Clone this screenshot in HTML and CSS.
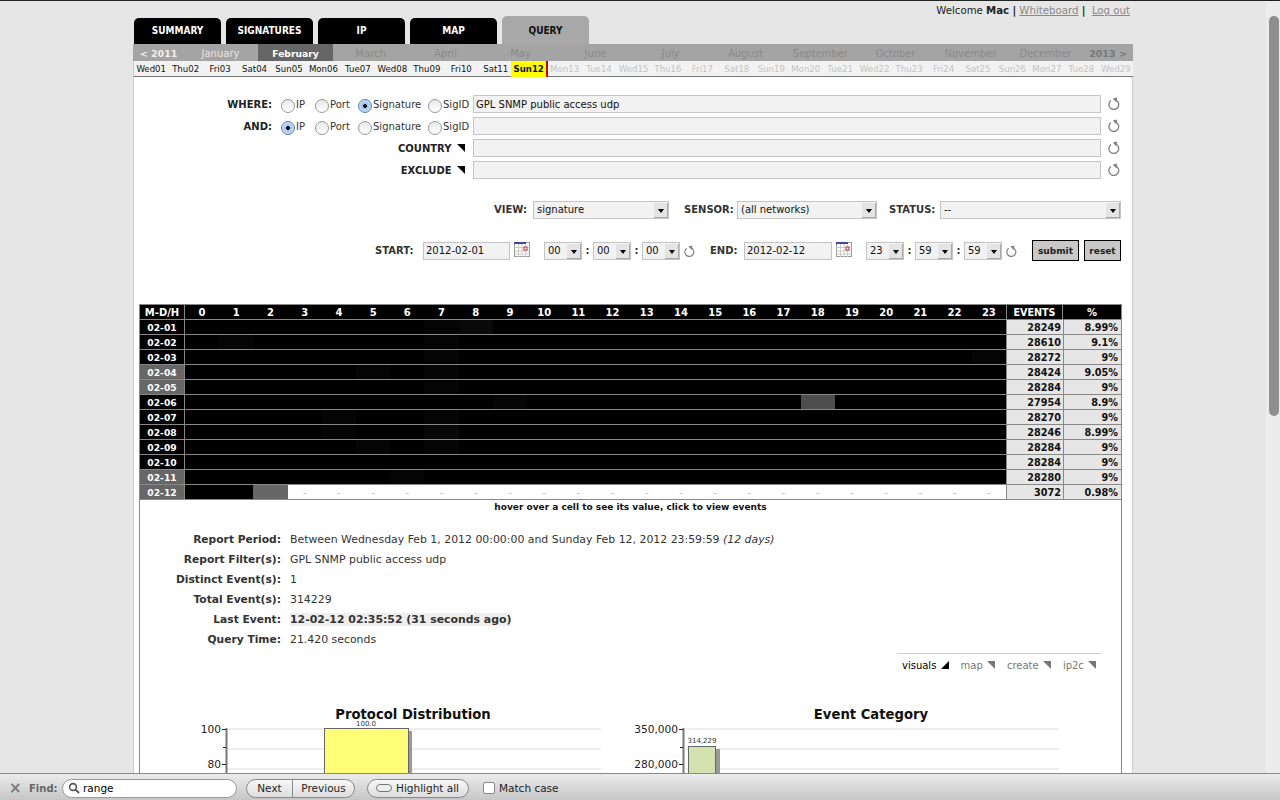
FILE: index.html
```html
<!doctype html>
<html lang="en">
    <head>
        <meta charset="utf-8">
        <title>Query</title>
        <link rel="stylesheet" href="styles.css">
    </head>
    <body>
        <svg class="defs" width="0" height="0">
            <symbol id="refresh" viewBox="0 0 12 13">
                <path d="M2.9 3.6 A4.9 4.9 0 1 0 7.6 3" fill="none" stroke="#808080" stroke-width="1.3"/>
                <path d="M9.2 0.4 L4.8 1.6 L8.4 5.4 Z" fill="#808080"/>
            </symbol>
            <symbol id="cal" viewBox="0 0 16 16">
                <rect x="0.5" y="0.5" width="15" height="14" fill="#fff" stroke="#999"/>
                <path d="M0.5 5.5H15.5M0.5 9H15.5M0.5 12H15.5M4.5 2V15M8 2V15M11.5 2V15" stroke="#ccc" fill="none"/>
                <rect x="0" y="0" width="12" height="2" fill="#44449c"/>
                <rect x="10" y="5" width="3" height="3" fill="#fff" stroke="#a33"/>
            </symbol>
        </svg>
        <div class="app">
            <div class="page">
                <div class="wrap">
                    <div class="welcome">Welcome <b>Mac</b> <b>|</b> <a href="#">Whiteboard</a> <b>|</b> &nbsp;<a href="#">Log out</a></div>
                    <div class="tabs">
                        <a class="tab" href="#">SUMMARY</a>
                        <a class="tab" href="#">SIGNATURES</a>
                        <a class="tab" href="#">IP</a>
                        <a class="tab" href="#">MAP</a>
                        <a class="tab active" href="#">QUERY</a>
                    </div>
                    <div class="months">
                        <a class="year" href="#">&lt; 2011</a>
                        <a class="has" href="#">January</a>
                        <a class="cur" href="#">February</a>
                        <a href="#">March</a>
                        <a href="#">April</a>
                        <a href="#">May</a>
                        <a href="#">June</a>
                        <a href="#">July</a>
                        <a href="#">August</a>
                        <a href="#">September</a>
                        <a href="#">October</a>
                        <a href="#">November</a>
                        <a href="#">December</a>
                        <a class="year next" href="#">2013 &gt;</a>
                    </div>
                    <div class="days">
                        <a href="#">Wed01</a><a href="#">Thu02</a><a href="#">Fri03</a><a href="#">Sat04</a><a href="#">Sun05</a><a href="#">Mon06</a><a href="#">Tue07</a><a href="#">Wed08</a><a href="#">Thu09</a><a href="#">Fri10</a><a href="#">Sat11</a><a class="today" href="#">Sun12</a><a class="off">Mon13</a><a class="off">Tue14</a><a class="off">Wed15</a><a class="off">Thu16</a><a class="off">Fri17</a><a class="off">Sat18</a><a class="off">Sun19</a><a class="off">Mon20</a><a class="off">Tue21</a><a class="off">Wed22</a><a class="off">Thu23</a><a class="off">Fri24</a><a class="off">Sat25</a><a class="off">Sun26</a><a class="off">Mon27</a><a class="off">Tue28</a><a class="off">Wed29</a>
                    </div>
                    <div class="main">
                        <form class="query">
                            <div class="qrow">
                                <label class="qlabel">WHERE:</label>
                                <label class="opt o1"><input type="radio" name="w"><span>IP</span></label>
                                <label class="opt o2"><input type="radio" name="w"><span>Port</span></label>
                                <label class="opt o3"><input type="radio" name="w" checked><span>Signature</span></label>
                                <label class="opt o4"><input type="radio" name="w"><span>SigID</span></label>
                                <input class="field" type="text" value="GPL SNMP public access udp">
                                <svg class="reset-ico"><use href="#refresh"/></svg>
                            </div>
                            <div class="qrow">
                                <label class="qlabel">AND:</label>
                                <label class="opt o1"><input type="radio" name="a" checked><span>IP</span></label>
                                <label class="opt o2"><input type="radio" name="a"><span>Port</span></label>
                                <label class="opt o3"><input type="radio" name="a"><span>Signature</span></label>
                                <label class="opt o4"><input type="radio" name="a"><span>SigID</span></label>
                                <input class="field" type="text">
                                <svg class="reset-ico"><use href="#refresh"/></svg>
                            </div>
                            <div class="qrow">
                                <label class="qlabel wide">COUNTRY <i class="tri"></i></label>
                                <input class="field" type="text">
                                <svg class="reset-ico"><use href="#refresh"/></svg>
                            </div>
                            <div class="qrow">
                                <label class="qlabel wide">EXCLUDE <i class="tri"></i></label>
                                <input class="field" type="text">
                                <svg class="reset-ico"><use href="#refresh"/></svg>
                            </div>
                            <div class="viewrow">
                                <b class="l-view">VIEW:</b>
                                <div class="sel s-view"><select><option>signature</option></select></div>
                                <b class="l-sensor">SENSOR:</b>
                                <div class="sel s-sensor"><select><option>(all networks)</option></select></div>
                                <b class="l-status">STATUS:</b>
                                <div class="sel s-status"><select><option>--</option></select></div>
                            </div>
                            <div class="daterow">
                                <b class="l-start">START:</b>
                                <input class="datein" type="text" value="2012-02-01">
                                <svg class="cal"><use href="#cal"/></svg>
                                <div class="sel s-time"><select><option>00</option></select></div><b class="colon">:</b>
                                <div class="sel s-time"><select><option>00</option></select></div><b class="colon">:</b>
                                <div class="sel s-time"><select><option>00</option></select></div>
                                <svg class="reset-small"><use href="#refresh"/></svg>
                                <b class="l-end">END:</b>
                                <input class="datein" type="text" value="2012-02-12">
                                <svg class="cal"><use href="#cal"/></svg>
                                <div class="sel s-time"><select><option>23</option></select></div><b class="colon">:</b>
                                <div class="sel s-time"><select><option>59</option></select></div><b class="colon">:</b>
                                <div class="sel s-time"><select><option>59</option></select></div>
                                <svg class="reset-small"><use href="#refresh"/></svg>
                                <button class="btn submit" type="button">submit</button>
                                <button class="btn" type="button">reset</button>
                            </div>
                        </form>

                        <div class="report">
                            <table class="heat">
                                <colgroup><col class="c-day"><col span="24"><col class="c-ev"><col class="c-pct"></colgroup>
                                <tr class="head"><th class="day">M-D/H</th><th>0</th><th>1</th><th>2</th><th>3</th><th>4</th><th>5</th><th>6</th><th>7</th><th>8</th><th>9</th><th>10</th><th>11</th><th>12</th><th>13</th><th>14</th><th>15</th><th>16</th><th>17</th><th>18</th><th>19</th><th>20</th><th>21</th><th>22</th><th>23</th><th class="ev">EVENTS</th><th class="pct">%</th></tr>
                                <tr><th class="day">02-01</th><td></td><td></td><td></td><td></td><td></td><td></td><td></td><td class="s1"></td><td class="s2"></td><td></td><td></td><td></td><td></td><td></td><td></td><td></td><td></td><td></td><td></td><td></td><td></td><td></td><td></td><td></td><td class="num">28249</td><td class="num">8.99%</td></tr>
                                <tr><th class="day">02-02</th><td></td><td class="s1"></td><td></td><td></td><td></td><td></td><td></td><td class="s1"></td><td></td><td></td><td></td><td></td><td></td><td></td><td></td><td></td><td></td><td></td><td></td><td></td><td></td><td></td><td></td><td></td><td class="num">28610</td><td class="num">9.1%</td></tr>
                                <tr><th class="day">02-03</th><td></td><td></td><td></td><td></td><td></td><td></td><td></td><td class="s1"></td><td></td><td></td><td></td><td></td><td></td><td></td><td></td><td></td><td></td><td></td><td></td><td></td><td></td><td></td><td></td><td class="s1"></td><td class="num">28272</td><td class="num">9%</td></tr>
                                <tr><th class="day wkend">02-04</th><td></td><td></td><td></td><td></td><td></td><td class="s1"></td><td></td><td class="s1"></td><td></td><td></td><td></td><td></td><td></td><td></td><td></td><td></td><td></td><td></td><td></td><td></td><td></td><td></td><td></td><td></td><td class="num">28424</td><td class="num">9.05%</td></tr>
                                <tr><th class="day wkend">02-05</th><td></td><td></td><td></td><td></td><td></td><td></td><td></td><td class="s1"></td><td></td><td></td><td></td><td></td><td></td><td></td><td></td><td></td><td></td><td></td><td></td><td></td><td></td><td></td><td></td><td></td><td class="num">28284</td><td class="num">9%</td></tr>
                                <tr><th class="day">02-06</th><td></td><td></td><td></td><td></td><td></td><td></td><td></td><td></td><td></td><td class="s1"></td><td></td><td></td><td></td><td></td><td></td><td></td><td></td><td></td><td class="low"></td><td></td><td></td><td></td><td></td><td></td><td class="num">27954</td><td class="num">8.9%</td></tr>
                                <tr><th class="day">02-07</th><td></td><td></td><td></td><td></td><td class="s1"></td><td></td><td></td><td class="s1"></td><td></td><td></td><td></td><td></td><td></td><td></td><td></td><td></td><td></td><td></td><td></td><td></td><td></td><td></td><td></td><td></td><td class="num">28270</td><td class="num">9%</td></tr>
                                <tr><th class="day">02-08</th><td></td><td></td><td></td><td></td><td class="s1"></td><td></td><td></td><td class="s2"></td><td></td><td></td><td></td><td></td><td></td><td></td><td></td><td></td><td></td><td></td><td></td><td></td><td></td><td></td><td></td><td></td><td class="num">28246</td><td class="num">8.99%</td></tr>
                                <tr><th class="day">02-09</th><td></td><td></td><td></td><td></td><td></td><td class="s1"></td><td></td><td class="s1"></td><td></td><td></td><td></td><td></td><td></td><td></td><td></td><td></td><td></td><td></td><td></td><td></td><td></td><td></td><td></td><td></td><td class="num">28284</td><td class="num">9%</td></tr>
                                <tr><th class="day">02-10</th><td></td><td></td><td></td><td></td><td></td><td></td><td></td><td></td><td></td><td></td><td></td><td></td><td></td><td></td><td></td><td></td><td></td><td></td><td></td><td></td><td></td><td></td><td></td><td></td><td class="num">28284</td><td class="num">9%</td></tr>
                                <tr><th class="day wkend">02-11</th><td></td><td></td><td></td><td></td><td></td><td></td><td class="s1"></td><td></td><td></td><td></td><td></td><td></td><td></td><td></td><td></td><td></td><td></td><td></td><td></td><td></td><td></td><td></td><td></td><td></td><td class="num">28280</td><td class="num">9%</td></tr>
                                <tr class="last"><th class="day wkend">02-12</th><td></td><td></td><td class="mid"></td><td class="none">-</td><td class="none">-</td><td class="none">-</td><td class="none">-</td><td class="none">-</td><td class="none">-</td><td class="none">-</td><td class="none">-</td><td class="none">-</td><td class="none">-</td><td class="none">-</td><td class="none">-</td><td class="none">-</td><td class="none">-</td><td class="none">-</td><td class="none">-</td><td class="none">-</td><td class="none">-</td><td class="none">-</td><td class="none">-</td><td class="none">-</td><td class="num">3072</td><td class="num">0.98%</td></tr>
                            </table>
                            <div class="hint">hover over a cell to see its value, click to view events</div>

                            <div class="stats">
                                <div class="k">Report Period:</div><div>Between Wednesday Feb 1, 2012 00:00:00 and Sunday Feb 12, 2012 23:59:59 <i>(12 days)</i></div>
                                <div class="k">Report Filter(s):</div><div>GPL SNMP public access udp</div>
                                <div class="k">Distinct Event(s):</div><div>1</div>
                                <div class="k">Total Event(s):</div><div>314229</div>
                                <div class="k">Last Event:</div><div><b class="hl">12-02-12 02:35:52 (31 seconds ago)</b></div>
                                <div class="k">Query Time:</div><div>21.420 seconds</div>
                            </div>

                            <div class="vtabs">
                                <a class="on" href="#">visuals <i class="tri up"></i></a>
                                <a href="#">map <i class="tri grey"></i></a>
                                <a href="#">create <i class="tri grey"></i></a>
                                <a href="#">ip2c <i class="tri grey"></i></a>
                            </div>

                            <div class="charts">
                                <svg class="chart c1" width="440" height="100">
                                    <text class="title" x="243" y="19" text-anchor="middle">Protocol Distribution</text>
                                    <path d="M58 29H431M58 49H431M58 69H431" stroke="#eee" stroke-width="2"/>
                                    <rect x="239" y="31" width="3" height="69" fill="#999"/>
                                    <rect x="154.5" y="28.5" width="84" height="80" fill="#ff7" stroke="#666"/>
                                    <path d="M56.5 28V100" stroke="#777" stroke-width="2"/>
                                    <path d="M52 29.5H56M53 47.5H56M52 64.5H56" stroke="#222"/>
                                    <text class="axis" x="51" y="33" text-anchor="end">100</text>
                                    <text class="axis" x="51" y="68" text-anchor="end">80</text>
                                    <text class="val" x="196" y="26" text-anchor="middle">100.0</text>
                                </svg>
                                <svg class="chart c2" width="450" height="100">
                                    <text class="title" x="251" y="19" text-anchor="middle">Event Category</text>
                                    <path d="M66 29H439M66 49H439M66 69H439" stroke="#eee" stroke-width="2"/>
                                    <rect x="96" y="49" width="4" height="51" fill="#999"/>
                                    <rect x="68.5" y="46.5" width="27" height="60" fill="#d4e2b0" stroke="#666"/>
                                    <path d="M63.5 28V100" stroke="#777" stroke-width="2"/>
                                    <path d="M59 29.5H63M60 47.5H63M59 64.5H63" stroke="#222"/>
                                    <text class="axis" x="58" y="33" text-anchor="end">350,000</text>
                                    <text class="axis" x="58" y="68" text-anchor="end">280,000</text>
                                    <text class="val" x="82" y="43" text-anchor="middle">314,229</text>
                                </svg>
                            </div>
                        </div>
                    </div>
                </div>
            </div>
            <div class="scrollbar"><div class="thumb"></div></div>
        </div>
        <div class="findbar">
            <span class="close">&times;</span>
            <span class="findlabel">Find:</span>
            <div class="findbox">
                <svg width="12" height="12" viewBox="0 0 12 12"><circle cx="5" cy="5" r="3.4" fill="none" stroke="#555" stroke-width="1.6"/><path d="M7.6 7.6L11 11" stroke="#555" stroke-width="2"/></svg>
                <input type="text" value="range">
            </div>
            <div class="fgroup"><button type="button">Next</button><button type="button">Previous</button></div>
            <button class="fhl" type="button"><i class="pill"></i>Highlight all</button>
            <label class="fmatch"><input type="checkbox">Match case</label>
        </div>
    </body>
</html>
```
FILE: styles.css
```css
html, body{
    margin: 0px;
    padding: 0px;
    height: 100%;
    overflow: hidden;
    background-color: #e6e6e6;
}
body{
    font-family: "DejaVu Sans", sans-serif;
    font-size: 11px;
    color: #222;
    border-top: 1px solid #222;
    box-sizing: border-box;
}
a{
    text-decoration: none;
    color: inherit;
}
.defs{
    display: block;
    height: 0;
}
.app{
    display: flex;
    height: 772px;
}
.page{
    width: 1266px;
    overflow: hidden;
}
.wrap{
    width: 1000px;
    margin-left: 133px;
}
.scrollbar{
    width: 14px;
    background-color: #ececec;
    padding: 15px 1px 0px 3px;
    box-sizing: border-box;
}
.thumb{
    height: 400px;
    border-radius: 5px;
    background-color: #8e8e8e;
}

/* header */
.welcome{
    height: 15px;
    line-height: 20px;
    text-align: right;
    font-size: 10.2px;
    padding-right: 3px;
}
.welcome a{
    color: #888;
    text-decoration: underline;
}
.tabs{
    display: flex;
    gap: 5px;
    align-items: flex-end;
    height: 28px;
    padding-left: 1px;
}
.tab{
    width: 87px;
    height: 26px;
    line-height: 26px;
    background-color: #000;
    color: #fff;
    border-radius: 5px 5px 0px 0px;
    text-align: center;
    font-family: "DejaVu Sans Condensed", sans-serif;
    font-weight: bold;
    font-size: 10px;
}
.tab.active{
    height: 28px;
    line-height: 29px;
    background-color: #a8a8a8;
    color: #111;
}
.months{
    display: flex;
    height: 17px;
    line-height: 19px;
    background-color: #a4a4a4;
    border-left: 1px solid #a4a4a4;
    font-size: 10px;
    color: #8a8a8a;
    text-align: center;
}
.months a{
    width: 75px;
}
.months .year{
    width: 49px;
    font-weight: bold;
    font-size: 9.5px;
    color: #eee;
}
.months .next{
    width: 50px;
    color: #777;
}
.months .has{
    color: #e4e4e4;
}
.months .cur{
    background-color: #666;
    color: #fff;
    font-weight: bold;
    font-size: 9.2px;
}
.days{
    display: grid;
    grid-template-columns: repeat(29, 1fr);
    height: 15px;
    line-height: 16px;
    background-color: #f2f2f2;
    border-left: 1px solid #ccc;
    border-bottom: 1px solid #777;
    font-size: 8.6px;
    text-align: center;
    color: #111;
}
.days .today{
    margin: 0px -1px 0px -2px;
    background-color: #ff0;
    border-right: 2px solid #c00;
    font-weight: bold;
}
.days .off{
    color: #c4c4c4;
}
.main{
    background-color: #fff;
    border-left: 1px solid #ccc;
    border-right: 1px solid #ccc;
    height: 720px;
}

/* query form */
.query{
    padding-top: 16px;
}
.qrow{
    display: flex;
    align-items: center;
    height: 22px;
}
.qlabel{
    width: 138px;
    text-align: right;
    font-weight: bold;
    font-size: 10px;
    margin-right: 9px;
}
.qlabel.wide{
    width: 331px;
    margin-right: 8px;
}
.opt{
    display: flex;
    align-items: flex-start;
    font-size: 10px;
    color: #333;
}
.opt span{
    margin-top: 3px;
    margin-left: 1px;
}
.o1{ width: 34px; }
.o2{ width: 43px; }
.o3{ width: 70px; }
.o4{ width: 45px; }
.opt input{
    appearance: none;
    -webkit-appearance: none;
    width: 14px;
    height: 14px;
    margin: 3px 0px 0px 0px;
    border-radius: 50%;
    border: 1px solid #999;
    background: linear-gradient(#e8e8e8, #fff);
    box-sizing: border-box;
}
.opt input:checked{
    border-color: #5a7fae;
    background: radial-gradient(circle, #000 0, #000 1.6px, #9cc4ec 2.2px, #cfe2f6 7px);
}
.field{
    width: 628px;
    height: 18px;
    box-sizing: border-box;
    border: 1px solid #c4c4c4;
    background-color: #f2f2f2;
    padding: 0px 2px;
    font-family: inherit;
    font-size: 10px;
    color: #111;
}
.reset-ico{
    width: 12px;
    height: 13px;
    margin: 0px 0px 1px 7px;
}
.tri{
    display: inline-block;
    width: 0;
    height: 0;
    margin-left: 2px;
    border-top: 8px solid #000;
    border-left: 8px solid transparent;
}
.tri.grey{
    border-top-color: #777;
}
.tri.up{
    border-top: 0;
    border-bottom: 8px solid #000;
}
.viewrow, .daterow{
    display: flex;
    align-items: center;
}
.viewrow b, .daterow b{
    flex: none;
    color: #333;
    font-size: 10px;
    white-space: nowrap;
}
.viewrow b{
    margin-bottom: 2px;
}
.viewrow{
    margin-top: 20px;
    height: 18px;
    padding-left: 360px;
}
.daterow{
    margin-top: 21px;
    height: 21px;
    padding-left: 241px;
}
.sel{
    flex: none;
    position: relative;
    height: 18px;
    box-sizing: border-box;
    border: 1px solid #c4c4c4;
    background-color: #f2f2f2;
}
.sel select{
    appearance: none;
    -webkit-appearance: none;
    border: 0;
    background: transparent;
    width: 100%;
    height: 15px;
    padding: 0px 3px;
    font-family: inherit;
    font-size: 10px;
    color: #111;
    display: block;
}
.sel::before{
    content: "";
    position: absolute;
    top: 1px;
    right: 0;
    width: 13px;
    height: 14px;
    background-color: #e4e4e4;
    border-right: 1px solid #aaa;
    border-bottom: 1px solid #aaa;
}
.sel::after{
    content: "";
    position: absolute;
    top: 7px;
    right: 4px;
    border-top: 4px solid #000;
    border-left: 3px solid transparent;
    border-right: 3px solid transparent;
}
.viewrow .l-view{ width: 35px; }
.s-view{ width: 136px; margin-left: 4px; }
.viewrow .l-sensor{ width: 50px; margin-left: 15px; }
.s-sensor{ width: 140px; margin-left: 3px; }
.viewrow .l-status{ width: 47px; margin-left: 12px; }
.s-status{ width: 181px; margin-left: 4px; }
.s-time{ width: 38px; }
.daterow .l-start{ width: 40px; }
.daterow .l-end{ width: 28px; margin-left: 15px; }
.daterow .colon{
    width: 11px;
    text-align: center;
}
.datein{
    flex: none;
    width: 87px;
    height: 18px;
    box-sizing: border-box;
    border: 1px solid #c4c4c4;
    background-color: #f2f2f2;
    padding: 0px 2px;
    margin-left: 8px;
    font-family: inherit;
    font-size: 10px;
    color: #111;
}
.daterow .l-end + .datein{
    width: 88px;
    margin-left: 6px;
}
.cal{
    flex: none;
    width: 16px;
    height: 16px;
    margin: 0px 14px 2px 4px;
}
.reset-small{
    flex: none;
    width: 11px;
    height: 12px;
    margin-left: 4px;
}
.btn{
    flex: none;
    height: 21px;
    border: 1px solid #000;
    background-color: #c8c8c8;
    font-family: inherit;
    font-weight: bold;
    font-size: 9px;
    color: #222;
    padding: 0px;
    width: 37px;
    margin-left: 5px;
}
.btn.submit{
    width: 47px;
    margin-left: 15px;
}

/* events per hour */
.report{
    margin: 43px 0px 0px 5px;
    width: 983px;
    height: 500px;
    border-left: 1px solid #888;
    border-right: 1px solid #888;
    box-sizing: border-box;
}
.heat{
    width: 100%;
    table-layout: fixed;
    border-collapse: separate;
    border-spacing: 0px;
    border-top: 1px solid #888;
    font-size: 10px;
}
.c-day{ width: 45px; }
.c-ev{ width: 57px; }
.c-pct{ width: 58px; }
.heat th, .heat td{
    height: 13px;
    padding: 1px 0px 0px 0px;
    border-bottom: 1px solid #888;
    background-color: #000;
    color: #fff;
    text-align: center;
    line-height: 13px;
}
.heat th.day{
    border-right: 1px solid #888;
}
.heat tr + tr th.day{
    font-size: 9.2px;
}
.heat th.wkend{
    background-color: #666;
}
.heat .ev{
    border-left: 1px solid #888;
    border-right: 1px solid #888;
    font-size: 9.6px;
}
.heat td.num{
    background-color: #e6e6e6;
    color: #111;
    font-weight: bold;
    font-size: 9.7px;
    text-align: right;
    padding-right: 2px;
    border-left: 1px solid #888;
}
.heat td.num + td.num{
    padding-right: 3px;
}
.heat td.s1{ background-color: #050505; }
.heat td.s2{ background-color: #090909; }
.heat td.low{ background-color: #4d4d4d; }
.heat td.mid{ background-color: #666; }
.heat td.none{
    background-color: #fff;
    color: #bbb;
}
.hint{
    height: 16px;
    line-height: 15px;
    text-align: center;
    font-weight: bold;
    font-size: 9px;
    color: #111;
}
.stats{
    display: grid;
    grid-template-columns: 141px 1fr;
    column-gap: 9px;
    grid-auto-rows: 20px;
    line-height: 20px;
    margin-top: 14px;
    color: #333;
    font-size: 10.9px;
}
.stats .k{
    text-align: right;
    font-weight: bold;
    font-size: 10.7px;
    line-height: 19px;
}
.hl{
    background-color: #eee;
    font-size: 10.9px;
}
.vtabs{
    display: flex;
    width: 204px;
    height: 22px;
    line-height: 24px;
    margin: 3px 20px 0px auto;
    padding-left: 5px;
    box-sizing: border-box;
    border-top: 1px solid #ccc;
    gap: 12px;
    font-size: 10px;
    color: #777;
}
.vtabs .on{
    color: #000;
}
.vtabs .tri{
    margin-left: 1px;
}
.charts{
    display: flex;
    margin-top: 25px;
    padding-left: 30px;
    gap: 10px;
}
.chart .title{
    font-weight: bold;
    font-size: 13.2px;
    fill: #111;
}
.chart .axis{
    font-size: 10.6px;
    fill: #222;
}
.chart .val{
    font-size: 7px;
    fill: #333;
}

/* firefox find bar */
.findbar{
    display: flex;
    align-items: center;
    height: 27px;
    box-sizing: border-box;
    border-top: 1px solid #888;
    background: linear-gradient(#ececec, #c6c6c6);
    font-size: 10.5px;
    color: #222;
    padding: 2px 0px 0px 9px;
}
.close{
    font-size: 15px;
    font-weight: bold;
    color: #777;
    width: 20px;
}
.findlabel{
    font-weight: bold;
    font-size: 10px;
    color: #666;
    width: 33px;
}
.findbox{
    display: flex;
    align-items: center;
    width: 175px;
    height: 19px;
    box-sizing: border-box;
    border: 1px solid #999;
    border-radius: 10px;
    background-color: #fff;
    padding-left: 5px;
}
.findbox input{
    border: 0;
    outline: 0;
    width: 140px;
    padding: 0px 0px 0px 3px;
    font-family: inherit;
    font-size: 10.5px;
    background: transparent;
}
.fgroup{
    display: flex;
    margin-left: 9px;
    height: 19px;
    border: 1px solid #888;
    border-radius: 10px;
    box-sizing: border-box;
    overflow: hidden;
    background: linear-gradient(#f8f8f8, #ddd);
}
.fgroup button, .fhl{
    border: 0;
    background: transparent;
    font-family: inherit;
    font-size: 10.5px;
    color: #222;
    padding: 0px;
}
.fgroup button{
    width: 45px;
}
.fgroup button + button{
    width: 62px;
    border-left: 1px solid #888;
}
.fhl{
    display: flex;
    align-items: center;
    width: 102px;
    height: 19px;
    margin-left: 12px;
    border: 1px solid #888;
    border-radius: 10px;
    box-sizing: border-box;
    background: linear-gradient(#f8f8f8, #ddd);
    padding-left: 8px;
}
.pill{
    width: 14px;
    height: 6px;
    border: 1px solid #777;
    border-radius: 4px;
    margin-right: 4px;
    background-color: #eee;
}
.fmatch{
    display: flex;
    align-items: center;
    margin-left: 14px;
}
.fmatch input{
    appearance: none;
    -webkit-appearance: none;
    width: 12px;
    height: 12px;
    margin: 0px 4px 0px 0px;
    border: 1px solid #888;
    border-radius: 2px;
    background-color: #fff;
}
```
